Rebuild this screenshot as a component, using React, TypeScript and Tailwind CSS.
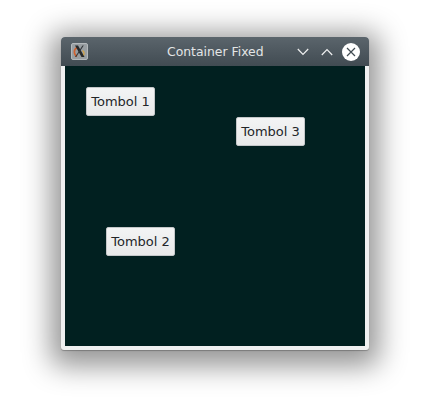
const buttons = [
  { label: "Tombol 1", left: "left-[21px]", top: "top-[21px]" },
  { label: "Tombol 2", left: "left-[41px]", top: "top-[161px]" },
  { label: "Tombol 3", left: "left-[171px]", top: "top-[51px]" },
];

export default function App() {
  return (
    <div className="h-[411px] w-[430px] overflow-hidden bg-white pl-[61px] pt-[37px] font-['DejaVu_Sans',sans-serif]">
      {/* Window */}
      <div className="flex h-[313px] w-[308px] flex-col rounded-[3px] bg-[#eff0f1] shadow-[0_6px_28px_10px_rgba(0,0,0,0.42),0_1px_1px_rgba(0,0,0,0.25)]">
        {/* Title bar */}
        <div className="flex h-[29px] items-center rounded-t-[4px] bg-gradient-to-b from-[#5b656c] to-[#414b52] pl-[10px] pr-[9px]">
          <div className="flex h-[17px] w-[17px] items-center justify-center rounded-[2px] border border-[#b4b9bc] bg-[#989ea2]">
            <svg width="15" height="15" viewBox="0 0 15 15">
              <path d="M5 3.5 C1.5 5.5 1.5 10.5 5 12.5" stroke="#d2602c" strokeWidth="1.6" fill="none" />
              <path d="M10.5 6.5 C13 8.5 12.5 11.5 9.5 12.8" stroke="#d9a53e" strokeWidth="1.2" fill="none" />
              <path d="M3 1.5 L6 1.5 L12.5 13 L9.5 13 Z" fill="#26292b" />
              <path d="M3 13 L10.5 1.5 L11.8 1.5 L4.2 13 Z" fill="#33373a" />
            </svg>
          </div>
          <div className="ml-[79px] w-[96px] whitespace-nowrap pt-[2px] text-[12.4px] leading-none text-[#e3e5e6]">Container Fixed</div>
          <div className="ml-[34px] flex items-center">
            <svg width="12" height="8" viewBox="0 0 12 8" fill="none" stroke="#eff0f1" strokeWidth="1.2">
              <path d="M0.8 1 L6 6.5 L11.2 1" />
            </svg>
            <svg className="ml-[12px]" width="12" height="8" viewBox="0 0 12 8" fill="none" stroke="#eff0f1" strokeWidth="1.2">
              <path d="M0.8 7 L6 1.5 L11.2 7" />
            </svg>
            <div className="ml-[9px] flex h-[18px] w-[18px] items-center justify-center rounded-full bg-white">
              <svg width="10" height="10" viewBox="0 0 10 10" stroke="#414b52" strokeWidth="1.2">
                <path d="M1 1 L9 9 M9 1 L1 9" />
              </svg>
            </div>
          </div>
        </div>
        {/* Client area */}
        <div className="px-[4px] pb-[4px]">
          <div className="relative h-[280px] w-[300px] bg-[#012020]">
            {buttons.map((b) => (
              <button
                key={b.label}
                className={`absolute ${b.left} ${b.top} flex h-[29px] w-[69px] items-center justify-center rounded-[2px] border border-[#c4c7c9] bg-gradient-to-b from-[#f3f4f4] to-[#e8e9ea] text-[13px] leading-none text-[#232629]`}
              >
                {b.label}
              </button>
            ))}
          </div>
        </div>
      </div>
    </div>
  );
}
